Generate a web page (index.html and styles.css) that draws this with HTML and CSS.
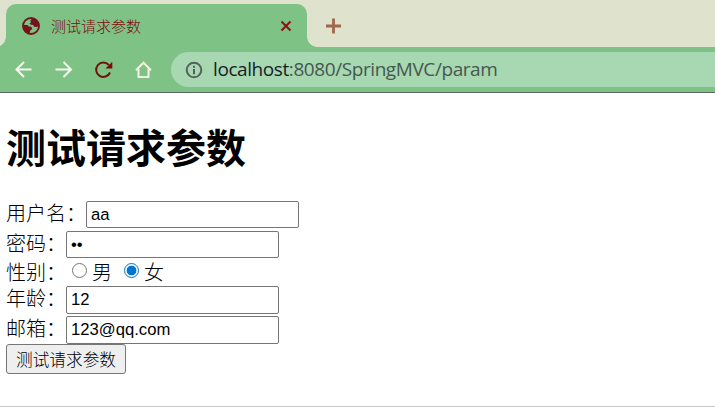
FILE: index.html
```html
<!DOCTYPE html>
<html lang="zh-CN">
<head>
<meta charset="utf-8">
<title>测试请求参数</title>
<link rel="stylesheet" href="styles.css">
</head>
<body>
<div class="tabstrip">
  <div class="tab">
    <svg class="globe" width="18" height="18" viewBox="0 0 18 18"><circle cx="9" cy="9" r="8" fill="none" stroke="#74141a" stroke-width="1.9"/><path d="M10 1.500 8.300 3.800 9 5.500 7.300 6.600 9 7.700 11.300 8 12 9.700 14.500 9.900 17 9 16 4.500 13 1.800Z" fill="#74141a"/><path d="M1 8h4.500l1.300 1.500 2.500.3L10.300 12 8.300 13.500 7.600 16.500 3.500 15 1 11Z" fill="#74141a"/></svg>
    <span class="tab-title">测试请求参数</span>
    <svg class="close" width="12" height="12" viewBox="0 0 12 12"><path d="M1.5 1.5l9 9M10.5 1.5l-9 9" stroke="#8c1216" stroke-width="2"/></svg>
  </div>
  <svg class="plus" width="16" height="16" viewBox="0 0 16 16"><path d="M8.500 .5v15M1 8h15" stroke="#a0674a" stroke-width="2.800"/></svg>
</div>
<div class="toolbar">
  <div class="nav">
    <svg width="20" height="20" viewBox="0 0 20 20"><path d="M18.500 9.500H3.500M11 2 3.500 9.500l7.500 7.500" fill="none" stroke="#f3f8ee" stroke-width="2"/></svg>
    <svg width="20" height="20" viewBox="0 0 20 20"><path d="M2.500 9.500h15M10.500 2 18 9.500l-7.500 7.500" fill="none" stroke="#f3f8ee" stroke-width="2"/></svg>
    <svg width="20" height="20" viewBox="0 0 20 20"><path d="M17 12.500A7.200 7.200 0 1 1 15.800 5" fill="none" stroke="#74100f" stroke-width="2"/><path d="M19.300 1.800v6.800h-6.800Z" fill="#74100f"/></svg>
    <svg width="20" height="20" viewBox="0 0 20 20"><path d="M3 10.300 10.500 2.700l7.500 7.600M5.500 9v8h10V9" fill="none" stroke="#f3f3df" stroke-width="2"/></svg>
  </div>
  <div class="omnibox">
    <svg width="18" height="18" viewBox="0 0 18 18"><circle cx="9" cy="9" r="7.300" fill="none" stroke="#55605d" stroke-width="2"/><path d="M9 4.800v2M9 8v5.200" stroke="#55605d" stroke-width="2"/></svg>
    <span class="url"><b>localhost</b>:8080/SpringMVC/param</span>
  </div>
</div>
<main>
  <h1>测试请求参数</h1>
  <form>
    <div class="row"><label>用户名：</label><input type="text" value="aa"></div>
    <div class="row"><label>密码：</label><input type="password" value="aa"></div>
    <div class="row sex"><label>性别：</label><i class="radio"></i><span class="male">男</span><i class="radio on"></i><span>女</span></div>
    <div class="row"><label>年龄：</label><input type="text" value="12"></div>
    <div class="row"><label>邮箱：</label><input type="text" value="123@qq.com"></div>
    <button type="button">测试请求参数</button>
  </form>
</main>
</body>
</html>
```
FILE: styles.css
```css
* { box-sizing: border-box; }
body {
  margin: 0;
  height: 407px;
  overflow: hidden;
  display: flex;
  flex-direction: column;
  background: #fff;
  color: #000;
  font-family: "Noto Sans CJK SC", sans-serif;
  border-bottom: 1px solid #c8c8c8;
}
svg { display: block; flex: none; }
.tabstrip {
  height: 47px;
  flex: none;
  display: flex;
  background: #dfe3ce;
  padding: 4px 0 0 6px;
}
.tab {
  position: relative;
  width: 301px;
  height: 43px;
  display: flex;
  align-items: center;
  padding: 0 15px 0 16px;
  background: #7ec385;
  border-radius: 10px 10px 0 0;
}
.tab::before, .tab::after {
  content: "";
  position: absolute;
  bottom: 0;
  width: 10px;
  height: 10px;
}
.tab::before { left: -10px; background: radial-gradient(circle at 0 0, transparent 9.5px, #7ec385 10px); }
.tab::after { right: -10px; background: radial-gradient(circle at 100% 0, transparent 9.5px, #7ec385 10px); }
.tab-title {
  flex: 1;
  margin-left: 11px;
  font-size: 15px;
  font-weight: 300;
  line-height: 20px;
  color: #7d0c0c;
}
.plus { margin: 14px 0 0 18px; }
.toolbar {
  height: 46px;
  flex: none;
  display: flex;
  background: #7ec385;
  border-bottom: 1px solid #5c6662;
  padding: 5px 0 5px 13px;
}
.nav {
  width: 158px;
  display: flex;
  align-items: center;
  gap: 20px;
}
.omnibox {
  flex: 1;
  display: flex;
  align-items: center;
  padding-left: 14px;
  border-radius: 18px 0 0 18px;
  background: #a7d8b1;
}
.url {
  margin: 0 0 2px 10px;
  font: 19px/30px "Open Sans", sans-serif;
  letter-spacing: -0.42px;
  color: #465750;
}
.url b { font-weight: 400; color: #17202a; }
main { padding: 25px 6px 0; }
h1 {
  margin: 0;
  height: 83px;
  font-size: 40px;
  line-height: 56px;
  font-weight: 700;
}
form { display: flex; flex-direction: column; align-items: flex-start; font-size: 20px; }
.row { display: flex; height: 27px; line-height: 24px; margin-bottom: 3px; font-weight: 300; }
.row:nth-child(2) { margin-bottom: 0; }
.row:nth-child(3) { height: 28px; line-height: 27px; margin-bottom: 0; }
.row:nth-child(4) { height: 28px; margin-bottom: 2px; }
.row:nth-child(5) { height: 28px; margin-bottom: 0; }
input {
  width: 213px;
  height: 100%;
  margin: 0;
  padding: 1px 4px;
  border: 1px solid #767676;
  border-radius: 2px;
  background: #fff;
  color: #000;
  font: 16.67px "Liberation Sans", sans-serif;
}
.radio {
  width: 15px;
  height: 15px;
  margin: 5px 5px 0 6px;
  border: 1px solid #767676;
  border-radius: 50%;
}
.radio.on { border-color: #0075d1; background: radial-gradient(circle, #0075d1 4.6px, #fff 5.2px); }
.male { margin-right: 6px; }
button {
  width: 120px;
  height: 30px;
  padding: 0;
  border: 1px solid #767676;
  border-radius: 3px;
  background: #efefef;
  color: #000;
  font: 300 16.67px/26px "Noto Sans CJK SC", sans-serif;
}
```
